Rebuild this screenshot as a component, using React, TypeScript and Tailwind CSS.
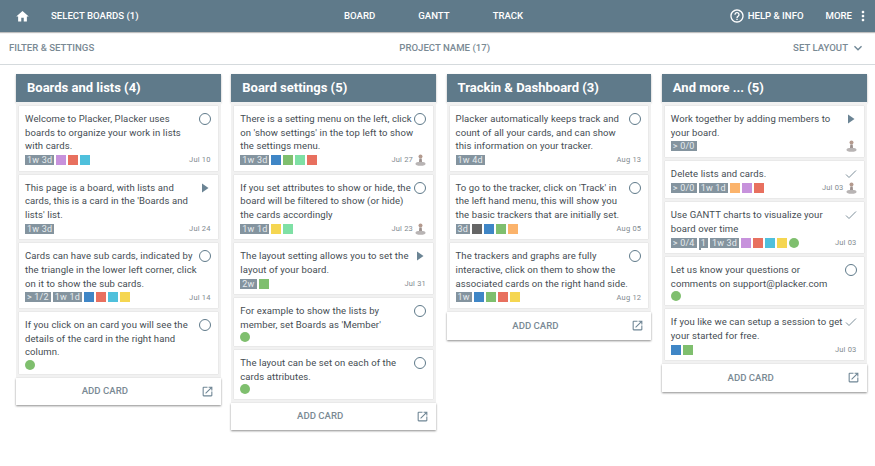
const font = { fontFamily: "Roboto, 'Liberation Sans', sans-serif" };

type Card = {
  text: string;
  icon?: "circle" | "play" | "check";
  tags?: string[];
  colors?: string[];
  dot?: boolean;
  date?: string;
  avatar?: boolean;
};

type List = { title: string; cards: Card[] };

const purple = "bg-[#c792dc]";
const red = "bg-[#e8705f]";
const cyan = "bg-[#4fc0dc]";
const blue = "bg-[#3f86c6]";
const green = "bg-[#7fbf6e]";
const mint = "bg-[#7fe0a5]";
const yellow = "bg-[#f5d651]";
const orange = "bg-[#fbb36b]";
const gray = "bg-[#666666]";

const lists: List[] = [
  {
    title: "Boards and lists (4)",
    cards: [
      { text: "Welcome to Placker, Placker uses boards to organize your work in lists with cards.", icon: "circle", tags: ["1w 3d"], colors: [purple, red, cyan], date: "Jul 10" },
      { text: "This page is a board, with lists and cards, this is a card in the 'Boards and lists' list.", icon: "play", tags: ["1w 3d"], date: "Jul 24" },
      { text: "Cards can have sub cards, indicated by the triangle in the lower left corner, click on it to show the sub cards.", icon: "circle", tags: ["> 1/2", "1w 1d"], colors: [blue, red, cyan, yellow], date: "Jul 14" },
      { text: "If you click on an card you will see the details of the card in the right hand column.", icon: "circle", dot: true },
    ],
  },
  {
    title: "Board settings (5)",
    cards: [
      { text: "There is a setting menu on the left, click on 'show settings' in the top left to show the settings menu.", icon: "circle", tags: ["1w 3d"], colors: [blue, green, mint, red], date: "Jul 27", avatar: true },
      { text: "If you set attributes to show or hide, the board will be filtered to show (or hide) the cards accordingly", icon: "circle", tags: ["1w 1d"], colors: [yellow, mint], date: "Jul 23", avatar: true },
      { text: "The layout setting allows you to set the layout of your board.", icon: "play", tags: ["2w"], colors: [green], date: "Jul 31" },
      { text: "For example to show the lists by member, set Boards as 'Member'", icon: "circle", dot: true },
      { text: "The layout can be set on each of the cards attributes.", icon: "circle", dot: true },
    ],
  },
  {
    title: "Trackin & Dashboard (3)",
    cards: [
      { text: "Placker automatically keeps track and count of all your cards, and can show this information on your tracker.", icon: "circle", tags: ["1w 4d"], date: "Aug 13" },
      { text: "To go to the tracker, click on 'Track' in the left hand menu, this will show you the basic trackers that are initially set.", icon: "circle", tags: ["3d"], colors: [gray, blue, green, orange], date: "Aug 05" },
      { text: "The trackers and graphs are fully interactive, click on them to show the associated cards on the right hand side.", icon: "circle", tags: ["1w"], colors: [blue, green, red, yellow], date: "Aug 12" },
    ],
  },
  {
    title: "And more ... (5)",
    cards: [
      { text: "Work together by adding members to your board.", icon: "play", tags: ["> 0/0"], avatar: true },
      { text: "Delete lists and cards.", icon: "check", tags: ["> 0/0", "1w 1d"], colors: [orange, purple, red], date: "Jul 03", avatar: true },
      { text: "Use GANTT charts to visualize your board over time", icon: "check", tags: ["> 0/4", "1", "1w 3d"], colors: [purple, red, cyan, yellow], dot: true, date: "Jul 03" },
      { text: "Let us know your questions or comments on support@placker.com", icon: "circle", dot: true },
      { text: "If you like we can setup a session to get your started for free.", icon: "check", colors: [blue, green], date: "Jul 03" },
    ],
  },
];

function StatusIcon({ icon }: { icon?: Card["icon"] }) {
  if (icon === "circle") {
    return <div className="w-3 h-3 rounded-full border border-[#5f7a8a]" />;
  }
  if (icon === "play") {
    return (
      <svg width="12" height="12" viewBox="0 0 12 12" className="text-[#6b8494]">
        <path d="M3 1.5 L9.5 6 L3 10.5 Z" fill="currentColor" />
      </svg>
    );
  }
  if (icon === "check") {
    return (
      <svg width="12" height="12" viewBox="0 0 12 12" fill="none" stroke="#7d8f9a" strokeWidth="1">
        <path d="M1 6.5 L4 9.5 L11 2.5" />
      </svg>
    );
  }
  return null;
}

function Avatar() {
  return (
    <svg width="11" height="12" viewBox="0 0 11 12" className="shrink-0">
      <circle cx="5.5" cy="2.6" r="2" fill="#b49a8e" />
      <path d="M4.3 4.5 H6.7 L7 8 H4 Z" fill="#9c8f8c" />
      <ellipse cx="5.5" cy="9.8" rx="5" ry="2" fill="#b8b4b4" />
    </svg>
  );
}

function BoardCard({ card }: { card: Card }) {
  const hasRow = card.tags || card.colors || card.dot || card.date || card.avatar;
  const rowHeight = card.tags || card.date ? "h-[14px]" : "h-[11px]";
  return (
    <div className="bg-white shadow-[0_0_1px_rgba(0,0,0,0.2)] pl-[6px] pr-[7px] pt-[6px] pb-[3.7px]">
      <div className="flex justify-between items-start">
        <p className="w-[173px] text-[9.5px] leading-[13.67px] text-[#444c52] tracking-[0.1px]">{card.text}</p>
        <div className="shrink-0 mt-px">
          <StatusIcon icon={card.icon} />
        </div>
      </div>
      {hasRow && (
        <div className={`flex items-center justify-between ${rowHeight}`}>
          <div className="flex items-center gap-[2px]">
            {card.tags?.map((t) => (
              <span key={t} className="relative h-[10px] px-[2px] bg-[#84949f] text-[#e6ebee] text-[9px] leading-[10px] tracking-[0.2px]">
                {t}
                {t === "1" && <span className="absolute left-0 top-[10px] w-[2px] h-[2px] bg-[#84949f]" />}
              </span>
            ))}
            {card.colors?.map((c, i) => (
              <span key={i} className={`w-[10px] h-[10px] ${c}`} />
            ))}
            {card.dot && <span className="w-[10px] h-[10px] rounded-full bg-[#7fbf6e]" />}
          </div>
          <div className="flex items-center gap-[2px]">
            {card.date && <span className="text-[7.5px] text-[#7f8a90] tracking-[0.2px]">{card.date}</span>}
            {card.avatar && <Avatar />}
          </div>
        </div>
      )}
    </div>
  );
}

function BoardList({ list }: { list: List }) {
  return (
    <div className="w-[204.7px] shrink-0">
      <div className="h-[28px] bg-[#5f7a8a] shadow-[0_1px_2px_rgba(0,0,0,0.3)] px-[11px] flex items-center text-white font-bold text-[13px]">
        {list.title}
      </div>
      <div className="bg-[#f1f1f1] px-[3px] pt-[4px] pb-[4px] flex flex-col gap-[4px]">
        {list.cards.map((c) => (
          <BoardCard key={c.text} card={c} />
        ))}
      </div>
      <div className="relative h-[27.5px] bg-white shadow-[0_1px_2px_rgba(0,0,0,0.45)] flex items-center justify-center pr-[27px] text-[#7a8a94] text-[9.6px] font-medium">
        ADD CARD
        <svg width="13" height="13" viewBox="0 0 24 24" fill="#6f8695" className="absolute right-[7px] top-[7px]">
          <path d="M19 19H5V5h7V3H5a2 2 0 0 0-2 2v14a2 2 0 0 0 2 2h14c1.1 0 2-.9 2-2v-7h-2v7zM14 3v2h3.59l-9.83 9.83 1.41 1.41L19 6.41V10h2V3h-7z" />
        </svg>
      </div>
    </div>
  );
}

export default function App() {
  return (
    <div className="w-[875px] h-[466px] overflow-hidden bg-white" style={font}>
      <header className="h-[32px] bg-[#5f7a8a] shadow-[0_1px_1px_rgba(0,0,0,0.25)] flex items-center justify-between text-white text-[9.6px] font-medium pl-[15px] pr-[4px]">
        <div className="flex items-center gap-[21px]">
          <svg width="15" height="15" viewBox="0 0 24 24" fill="white" className="shrink-0">
            <path d="M10 20v-6h4v6h5v-8h3L12 3 2 12h3v8z" />
          </svg>
          <span>SELECT BOARDS (1)</span>
        </div>
        <div className="flex items-center gap-[43px]">
          <span>BOARD</span>
          <span>GANTT</span>
          <span>TRACK</span>
        </div>
        <div className="flex items-center">
          <svg width="16" height="16" viewBox="0 0 24 24" fill="white" className="mr-[3px]">
            <path d="M11 18h2v-2h-2v2zm1-16C6.48 2 2 6.48 2 12s4.48 10 10 10 10-4.48 10-10S17.52 2 12 2zm0 18c-4.41 0-8-3.59-8-8s3.59-8 8-8 8 3.59 8 8-3.59 8-8 8zm0-14c-2.21 0-4 1.79-4 4h2c0-1.1.9-2 2-2s2 .9 2 2c0 2-3 1.75-3 5h2c0-2.25 3-2.5 3-5 0-2.21-1.79-4-4-4z" />
          </svg>
          <span>HELP &amp; INFO</span>
          <span className="ml-[22px]">MORE</span>
          <svg width="16" height="16" viewBox="0 0 24 24" fill="white" className="ml-[3px]">
            <path d="M12 8c1.1 0 2-.9 2-2s-.9-2-2-2-2 .9-2 2 .9 2 2 2zm0 2c-1.1 0-2 .9-2 2s.9 2 2 2 2-.9 2-2-.9-2-2-2zm0 6c-1.1 0-2 .9-2 2s.9 2 2 2 2-.9 2-2-.9-2-2-2z" />
          </svg>
        </div>
      </header>
      <div className="h-[33px] border-b border-[#d5dadd] flex items-center justify-between text-[#7a8a94] text-[9.6px] font-medium pl-[9px] pr-[9px]">
        <span>FILTER &amp; SETTINGS</span>
        <span className="ml-[2px]">PROJECT NAME (17)</span>
        <div className="flex items-center gap-[2px]">
          <span>SET LAYOUT</span>
          <svg width="16" height="16" viewBox="0 0 24 24" fill="#6f8695">
            <path d="M7.41 8.59 12 13.17l4.59-4.58L18 10l-6 6-6-6z" />
          </svg>
        </div>
      </div>
      <main className="flex items-start gap-[10.6px] pl-[16px] pt-[9px]">
        {lists.map((l) => (
          <BoardList key={l.title} list={l} />
        ))}
      </main>
    </div>
  );
}
